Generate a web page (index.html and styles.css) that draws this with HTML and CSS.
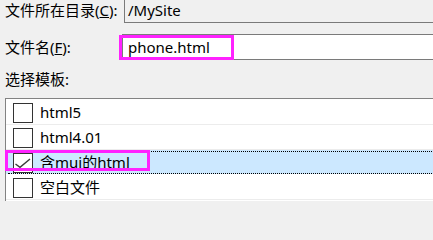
FILE: index.html
```html
<!DOCTYPE html>
<html>
<head>
<meta charset="utf-8">
<link rel="stylesheet" href="styles.css">
</head>
<body>
<div class="dialog">
  <div class="row">
    <label class="lbl lbl-dir">文件所在目录(<u>C</u>):</label>
    <div class="field field-dir">/MySite</div>
  </div>
  <div class="row row-name">
    <label class="lbl lbl-name">文件名(<u>F</u>):</label>
    <div class="field field-name"><span>phone.html</span><span class="hl hl-name"></span></div>
  </div>
  <div class="tpl-label">选择模板:</div>
  <ul class="list">
    <li class="item"><span class="cb"></span><span class="txt">html5</span></li>
    <li class="item"><span class="cb"></span><span class="txt">html4.01</span></li>
    <li class="item sel"><span class="cb"><svg class="check" width="18" height="18" viewBox="0 0 18 18"><path d="M1.5 10 L6 13.3 L16 5" fill="none" stroke="#3a3a3a" stroke-width="1.4"/></svg></span><span class="txt">含mui的html</span><span class="hl hl-sel"></span></li>
    <li class="item"><span class="cb"></span><span class="txt">空白文件</span></li>
  </ul>
</div>
</body>
</html>
```

FILE: styles.css
```css
html, body {
  overflow: hidden;
}
body {
  margin: 0;
  background: #f0f0f0;
  font-family: "Noto Sans", "Noto Sans CJK SC", sans-serif;
  font-size: 15px;
  line-height: 20px;
  color: #000;
}
.dialog {
  padding-left: 5px;
  margin-top: -3px;
}
.row {
  display: flex;
  align-items: center;
  height: 26px;
}
.row-name {
  margin-top: 11px;
}
.lbl {
  flex: none;
}
.lbl-dir { width: 119px; }
.lbl-name { width: 117px; }
.field {
  flex: 1;
  height: 26px;
  box-sizing: border-box;
  border: 1px solid #7a7a7a;
  margin-right: -20px;
  display: flex;
  align-items: center;
  position: relative;
}
.field-dir {
  background: #f0f0f0;
  padding-left: 3px;
}
.field-name {
  background: #fff;
  padding-left: 5px;
}
.hl {
  position: absolute;
  box-sizing: border-box;
  border: 3px solid #ff22ff;
}
.hl-name {
  left: -4px;
  top: 0;
  width: 115px;
  height: 25px;
}
.tpl-label {
  margin-top: 9px;
}
.list {
  margin: 9px -20px 0 0;
  padding: 1px 0 1px;
  list-style: none;
  border: 1px solid #828282;
  border-bottom: none;
  background: #fff;
}
.item {
  position: relative;
  display: flex;
  align-items: center;
  height: 24px;
  border-bottom: 1px solid #ececec;
  padding-left: 7px;
}
.cb {
  flex: none;
  width: 20px;
  height: 20px;
  box-sizing: border-box;
  border: 1px solid #333;
  background: #fff;
  margin-top: 2px;
  display: flex;
}
.txt {
  margin-left: 7px;
}
.item.sel {
  background: #cce8ff;
  border-bottom-color: #fff;
}
.item.sel::after {
  content: "";
  position: absolute;
  left: 2px;
  right: 0;
  top: 1px;
  bottom: 0;
  border-top: 1px dotted #000;
  border-bottom: 1px dotted #000;
}
.hl-sel {
  left: -1px;
  top: 0;
  width: 145px;
  height: 21px;
  z-index: 1;
}
```
